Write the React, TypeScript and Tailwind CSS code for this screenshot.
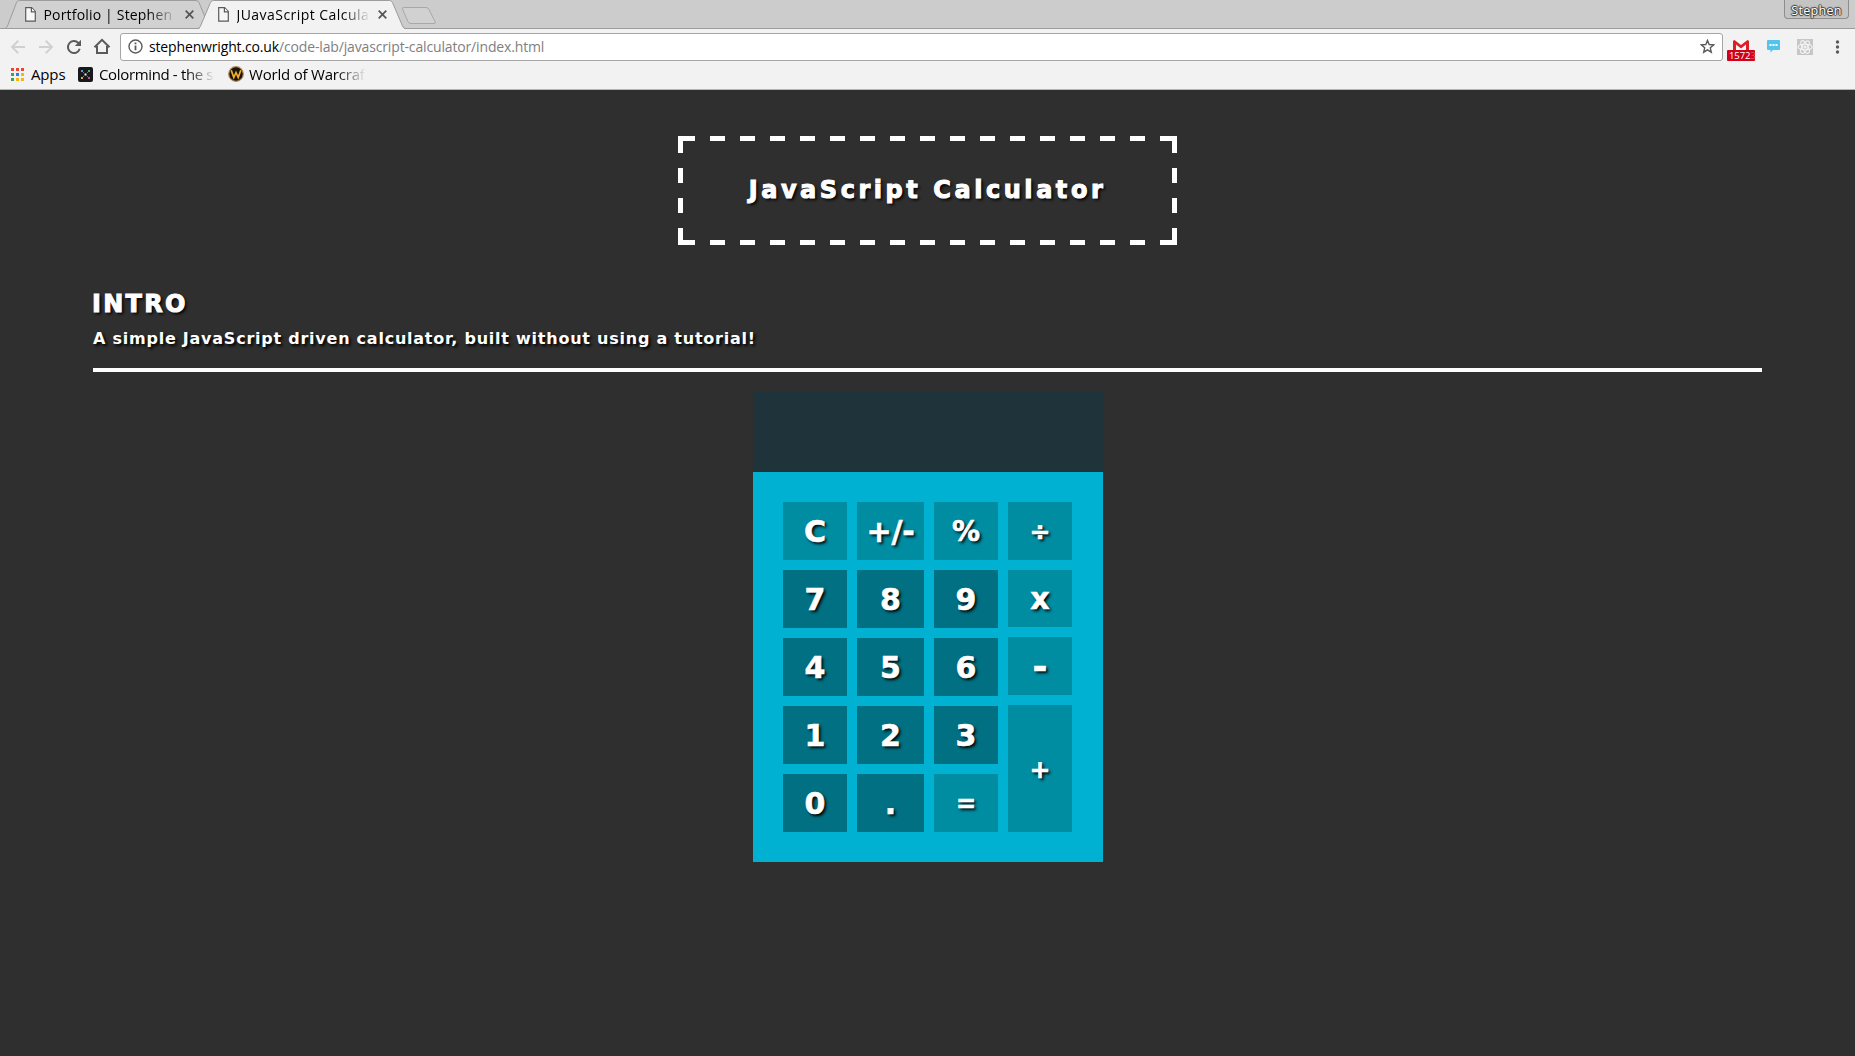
import React from 'react';
import clsx from 'clsx';

const PageIcon = () => (
  <svg width="11" height="15" viewBox="0 0 11 15" className="shrink-0" fill="#f7f7f7" stroke="#5a5a5a" strokeWidth="1.2">
    <path d="M.7.7H6.6L10.3 4.6V14.1H.7Z" />
    <path d="M6.4.8V4.8H10.2" />
  </svg>
);

const CloseIcon = () => (
  <svg width="9" height="9" viewBox="0 0 9 9" className="shrink-0" stroke="#555" strokeWidth="1.7">
    <path d="M.7.7 8.3 8.3M8.3.7.7 8.3" />
  </svg>
);

function TabStrip() {
  return (
    <div className="relative h-[29px] bg-[#cccccc]">
      <svg className="absolute left-0 top-0" width="450" height="29" viewBox="0 0 450 29" stroke="#9c9c9c">
        <path d="M5 28.5Q6.500 28 7.500 26L16.500 2.500Q17.300.5 19.500.5H196Q198 .5 199 2.500L210 29" fill="#d1d1d1" />
        <path d="M404 7.500H426Q428 7.500 428.800 9.300L435 21.500Q436 23.500 434 23.500H411Q408.800 23.500 407.900 21.500L402.600 9.300Q402 7.500 404 7.500Z" fill="#d1d1d1" stroke="#a8a8a8" />
      </svg>
      <div className="absolute inset-x-0 bottom-0 h-px bg-[#9c9c9c]" />
      <svg className="absolute left-0 top-0" width="450" height="29" viewBox="0 0 450 29" stroke="#9c9c9c">
        <path d="M198 28.500Q199.500 28 200.500 26L210.500 2.500Q211.500.5 213.500.5H389.500Q391.500.5 392.500 2.500L402.500 26Q403.500 28.500 405 28.500" fill="#f2f2f2" />
        <path d="M200 28.500H404" stroke="#f2f2f2" />
      </svg>
      <div className="relative flex h-[29px] items-center pl-[24.500px] text-[14px] text-black">
        <PageIcon />
        <span className="ml-[8px] w-[137px] overflow-hidden whitespace-nowrap tracking-[0.18px] [mask-image:linear-gradient(to_right,#000_76%,transparent_97%)]">
          Portfolio | Stephen
        </span>
        <span className="ml-[4px] flex"><CloseIcon /></span>
        <span className="ml-[24px] flex"><PageIcon /></span>
        <span className="ml-[8px] w-[136px] overflow-hidden whitespace-nowrap tracking-[0.45px] [mask-image:linear-gradient(to_right,#000_78%,transparent_98%)]">
          JUavaScript Calcula
        </span>
        <span className="ml-[5px] flex"><CloseIcon /></span>
        <div className="ml-auto mr-[6px] flex h-[19px] w-[65px] self-start items-center justify-center rounded-b-[4px] border border-t-0 border-[#8d8d8d] bg-[#c4c4c4] pt-[5px] text-[12.500px] tracking-[0.3px] text-white [text-shadow:1px_0_1px_#333,-1px_0_1px_#333,0_1px_1px_#333,0_-1px_1px_#333]">
          Stephen
        </div>
      </div>
    </div>
  );
}

function Toolbar() {
  return (
    <div className="flex h-[35px] items-center bg-[#f2f2f2] pl-[10px] pr-[15px]">
      <svg width="16" height="16" viewBox="0 0 16 16" fill="none" stroke="#d0d0d0" strokeWidth="1.9"><path d="M15 8H2.500M8.300 1.800 2 8 8.300 14.200" /></svg>
      <svg className="ml-[12px]" width="16" height="16" viewBox="0 0 16 16" fill="none" stroke="#d0d0d0" strokeWidth="1.900"><path d="M1 8H13.500M7.700 1.800 14 8 7.700 14.200" /></svg>
      <svg className="ml-[12px]" width="16" height="16" viewBox="0 0 16 16" fill="none" stroke="#5a5a5a" strokeWidth="2"><path d="M13.700 9.800A6 6 0 1 1 12.300 3.900L13.500 5.200" /><path d="M15 .8V7H8.800Z" fill="#5a5a5a" stroke="none" /></svg>
      <svg className="ml-[11px]" width="18" height="17" viewBox="0 0 18 17" fill="none" stroke="#5a5a5a" strokeWidth="2"><path d="M1.500 9.300 9 1.800 16.500 9.300M4 8V15H14V8" /></svg>
      <div className="ml-[9px] flex h-[28px] flex-1 items-center rounded-[3px] border border-[#a6a6a6] bg-white pl-[7px] pr-[7px]">
        <svg width="15" height="15" viewBox="0 0 15 15" fill="none" stroke="#5a5a5a" strokeWidth="1.400"><circle cx="7.500" cy="7.500" r="6.500" /><path d="M7.500 6.500V11.200M7.500 3.600V5.300" strokeWidth="1.800" /></svg>
        <span className="ml-[6px] whitespace-nowrap text-[14px] tracking-[-0.15px] text-[#808080]">
          <span className="text-black">stephenwright.co.uk</span>/code-lab/javascript-calculator/index.html
        </span>
        <svg className="ml-auto" width="15" height="15" viewBox="0 0 15 15" fill="none" stroke="#5a5a5a" strokeWidth="1.400"><path d="M7.500 1.400 9.200 5.500 13.700 5.900 10.300 8.800 11.300 13.200 7.500 10.900 3.700 13.200 4.700 8.800 1.300 5.900 5.800 5.500Z" /></svg>
      </div>
      <div className="ml-[4px] mt-[7px] flex w-[28px] flex-col items-center">
        <svg width="16" height="10" viewBox="0 0 16 10"><path d="M0 0H16V10H0Z" fill="#f7f7f7" /><path d="M0 10V1.500Q0 0 1.500 0L8 5 14.500 0Q16 0 16 1.500V10H13V4.500L8 8.500 3 4.500V10Z" fill="#dc1f28" /></svg>
        <div className="h-[11px] w-[28px] rounded-[1px] bg-[#d0021b] pl-[2px] text-[9.500px] leading-[11px] tracking-[-0.1px] text-white">1572<span className="text-[#e0566a]">3</span></div>
      </div>
      <svg className="ml-[12px]" width="13" height="13" viewBox="0 0 13 13"><path d="M1 0H12Q13 0 13 1V9Q13 10 12 10H6L3.500 12.500V10H1Q0 10 0 9V1Q0 0 1 0Z" fill="#53c4ec" /><path d="M2.500 4H4.500V6H2.500ZM5.500 4H7.500V6H5.500ZM8.500 4H10.500V6H8.500Z" fill="#fff" /></svg>
      <svg className="ml-[17px]" width="16" height="16" viewBox="0 0 16 16" fill="none" stroke="#f3f3f3" strokeWidth="1.100"><rect width="16" height="16" fill="#c6c6c6" stroke="none" /><ellipse cx="8" cy="8" rx="7" ry="2.800" /><ellipse cx="8" cy="8" rx="7" ry="2.800" transform="rotate(60 8 8)" /><ellipse cx="8" cy="8" rx="7" ry="2.800" transform="rotate(120 8 8)" /><circle cx="8" cy="8" r="1" fill="#f3f3f3" /></svg>
      <svg className="ml-[22px]" width="5" height="14" viewBox="0 0 5 14" fill="#5a5a5a"><circle cx="2.500" cy="2" r="1.700" /><circle cx="2.500" cy="7" r="1.700" /><circle cx="2.500" cy="12" r="1.700" /></svg>
    </div>
  );
}

function Bookmarks() {
  return (
    <div className="flex h-[26px] items-center border-b border-[#b4b4b4] bg-[#f2f2f2] pb-[5px] pl-[11px] text-[15px] leading-[20px] text-black">
      <div className="grid grid-cols-3 gap-[2px]">
        <i className="size-[3px] bg-[#ea4335]" /><i className="size-[3px] bg-[#ea4335]" /><i className="size-[3px] bg-[#ea4335]" />
        <i className="size-[3px] bg-[#34a853]" /><i className="size-[3px] bg-[#2f7df0]" /><i className="size-[3px] bg-[#f7b70a]" />
        <i className="size-[3px] bg-[#34a853]" /><i className="size-[3px] bg-[#f7b70a]" /><i className="size-[3px] bg-[#f7b70a]" />
      </div>
      <span className="ml-[7px] w-[34px] whitespace-nowrap tracking-[-0.15px]">Apps</span>
      <svg className="ml-[13px] shrink-0" width="15" height="15" viewBox="0 0 15 15">
        <rect width="15" height="15" rx="2" fill="#19191d" />
        <path d="M3 3H5V5H3Z" fill="#4aa3c7" /><path d="M10 3H12V5H10Z" fill="#49b06c" /><path d="M3 10H5V12H3Z" fill="#c9b04a" /><path d="M10 10H12V12H10Z" fill="#c2508c" /><path d="M6.500 6.500H8.500V8.500H6.500Z" fill="#f4f4f4" /><path d="M5 5H6V6H5ZM9 9H10V10H9ZM9 5H10V6H9ZM5 9H6V10H5Z" fill="#777" />
      </svg>
      <span className="ml-[6px] w-[116px] overflow-hidden whitespace-nowrap tracking-[-0.35px] [mask-image:linear-gradient(to_right,#000_75%,transparent_100%)]">Colormind - the s</span>
      <svg className="ml-[13px] shrink-0" width="16" height="16" viewBox="0 0 16 16">
        <circle cx="8" cy="8" r="7.300" fill="#1c120b" stroke="#a98a5a" strokeWidth="1.200" />
        <path d="M3.200 4.200 5.800 11.500 8 6.500 10.200 11.500 12.800 4.200" fill="none" stroke="#f0b02a" strokeWidth="1.700" />
      </svg>
      <span className="ml-[5px] w-[117px] overflow-hidden whitespace-nowrap tracking-[-0.2px] [mask-image:linear-gradient(to_right,#000_75%,transparent_100%)]">World of Warcraf</span>
    </div>
  );
}

const DashedFrame = () => (
  <svg className="absolute inset-0" width="499" height="109" viewBox="0 0 499 109" fill="none" stroke="#fff" strokeWidth="5" shapeRendering="crispEdges">
    <path d="M2 2.500H497M2 106.500H497" strokeDasharray="15" />
    <path d="M2.500 2V107M496.500 2V107" strokeDasharray="15" />
    <path d="M0 2.500H5M494 2.500H499M0 106.500H5M494 106.500H499" />
  </svg>
);

type KeyProps = { label: string; tone?: 'light' | 'dark'; size?: string; text?: string };

function Key({ label, tone = 'dark', size = 'h-[58px]', text = 'text-[30px]' }: KeyProps) {
  return (
    <button
      className={clsx(
        'flex w-full items-center justify-center pl-[1px] pt-[1px] font-bold leading-none [-webkit-text-stroke:0.6px_#fff] [text-shadow:2px_2px_3px_#000]',
        tone === 'light' ? 'bg-[#008ca1]' : 'bg-[#007082]',
        size,
        text,
      )}
    >
      {label}
    </button>
  );
}

function Calculator() {
  return (
    <div className="mx-auto mt-[20px] w-[350px]">
      <div className="h-[80px] bg-[#1f343a]" />
      <div className="flex h-[390px] gap-[10px] bg-[#00b1d1] pl-[30px] pt-[30px]">
        <div className="flex w-[64px] flex-col gap-[10px]">
          <Key label="C" tone="light" /><Key label="7" /><Key label="4" /><Key label="1" /><Key label="0" />
        </div>
        <div className="flex w-[67px] flex-col gap-[10px]">
          <Key label="+/-" tone="light" text="text-[30px] tracking-[-0.2px]" /><Key label="8" /><Key label="5" /><Key label="2" /><Key label="." />
        </div>
        <div className="flex w-[64px] flex-col gap-[10px]">
          <Key label="%" tone="light" text="text-[28px]" /><Key label="9" /><Key label="6" /><Key label="3" /><Key label="=" tone="light" text="text-[24px]" />
        </div>
        <div className="flex w-[64px] flex-col gap-[10px]">
          <Key label="÷" tone="light" text="text-[25px]" /><Key label="x" tone="light" size="h-[57px]" /><Key label="-" tone="light" text="text-[36px]" /><Key label="+" tone="light" size="h-[127px]" text="text-[25px]" />
        </div>
      </div>
    </div>
  );
}

export default function App() {
  return (
    <div className="flex h-[1056px] w-[1855px] flex-col overflow-hidden bg-[#2f2f2f]">
      <header className="font-['Open_Sans',sans-serif]">
        <TabStrip />
        <Toolbar />
        <Bookmarks />
      </header>
      <main className="px-[93px] font-['DejaVu_Sans',sans-serif] font-bold text-white">
        <div className="relative mx-auto mt-[46px] flex h-[109px] w-[499px] items-center justify-center pb-[2px]">
          <DashedFrame />
          <h1 className="whitespace-nowrap text-[24px] font-bold leading-[30px] tracking-[3.550px] [-webkit-text-stroke:1px_#fff] [text-shadow:2px_2px_3px_#000]">JavaScript Calculator</h1>
        </div>
        <h2 className="-ml-[1px] mt-[45px] text-[24px] font-bold leading-[28px] tracking-[2.300px] [-webkit-text-stroke:1px_#fff] [text-shadow:2px_2px_3px_#000]">INTRO</h2>
        <p className="mt-[9px] whitespace-nowrap text-[16px] leading-[24px] tracking-[0.760px] [text-shadow:2px_2px_3px_#000]">
          A simple JavaScript driven calculator, built without using a tutorial!
        </p>
        <div className="mt-[17px] h-[4px] bg-white" />
        <Calculator />
      </main>
    </div>
  );
}
